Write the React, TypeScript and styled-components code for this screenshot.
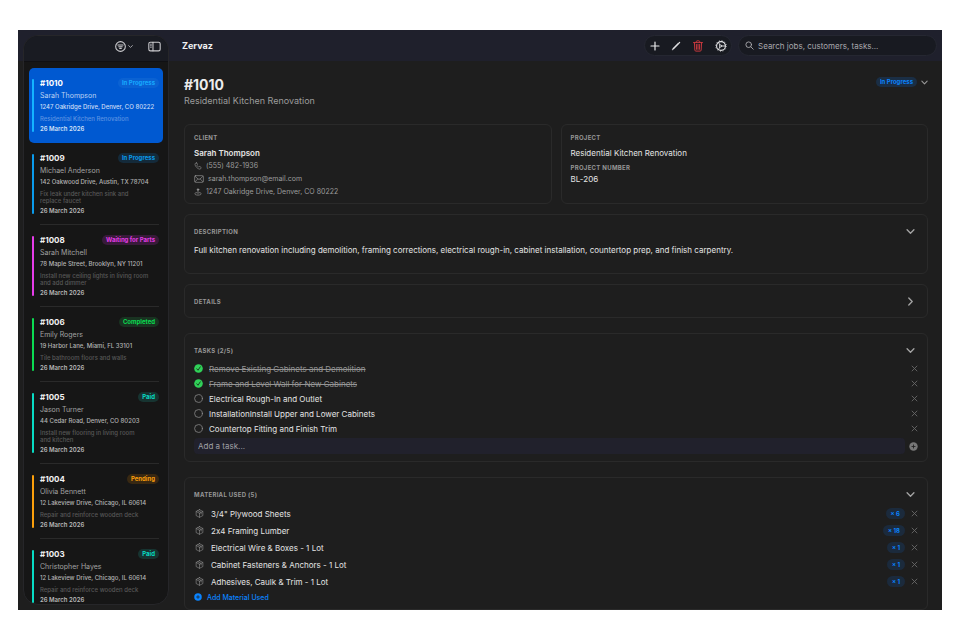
import React, { useState } from "react";
import styled, { createGlobalStyle, css } from "styled-components";

const GlobalStyle = createGlobalStyle`
  *, *::before, *::after { box-sizing: border-box; }
  body {
    margin: 0;
    background: #ffffff;
    font-family: Inter, "Liberation Sans", sans-serif;
    font-feature-settings: "calt" 0;
    -webkit-font-smoothing: antialiased;
  }
  button, input, select { font-family: inherit; }
  h1, h2, h3, p, ul { margin: 0; padding: 0; }
  ul { list-style: none; }
`;

/* ---------- data ---------- */

type Status = "In Progress" | "Waiting for Parts" | "Completed" | "Paid" | "Pending";

const statusColors: Record<Status, { text: string; fill: string }> = {
  "In Progress": { text: "#0a9bec", fill: "#142a3a" },
  "Waiting for Parts": { text: "#e53ce8", fill: "#381a3a" },
  Completed: { text: "#0bdc52", fill: "#193321" },
  Paid: { text: "#08dcc4", fill: "#173431" },
  Pending: { text: "#fb9f0b", fill: "#382812" },
};

interface Job {
  id: string;
  status: Status;
  customer: string;
  address: string;
  summary: string;
  date: string;
}

const jobs: Job[] = [
  { id: "#1010", status: "In Progress", customer: "Sarah Thompson", address: "1247 Oakridge Drive, Denver, CO 80222", summary: "Residential Kitchen Renovation", date: "26 March 2026" },
  { id: "#1009", status: "In Progress", customer: "Michael Anderson", address: "142 Oakwood Drive, Austin, TX 78704", summary: "Fix leak under kitchen sink and\nreplace faucet", date: "26 March 2026" },
  { id: "#1008", status: "Waiting for Parts", customer: "Sarah Mitchell", address: "78 Maple Street, Brooklyn, NY 11201", summary: "Install new ceiling lights in living room\nand add dimmer", date: "26 March 2026" },
  { id: "#1006", status: "Completed", customer: "Emily Rogers", address: "19 Harbor Lane, Miami, FL 33101", summary: "Tile bathroom floors and walls", date: "26 March 2026" },
  { id: "#1005", status: "Paid", customer: "Jason Turner", address: "44 Cedar Road, Denver, CO 80203", summary: "Install new flooring in living room\nand kitchen", date: "26 March 2026" },
  { id: "#1004", status: "Pending", customer: "Olivia Bennett", address: "12 Lakeview Drive, Chicago, IL 60614", summary: "Repair and reinforce wooden deck", date: "26 March 2026" },
  { id: "#1003", status: "Paid", customer: "Christopher Hayes", address: "12 Lakeview Drive, Chicago, IL 60614", summary: "Repair and reinforce wooden deck", date: "26 March 2026" },
];

const initialTasks = [
  { label: "Remove Existing Cabinets and Demolition", done: true },
  { label: "Frame and Level Wall for New Cabinets", done: true },
  { label: "Electrical Rough-In and Outlet", done: false },
  { label: "InstallationInstall Upper and Lower Cabinets", done: false },
  { label: "Countertop Fitting and Finish Trim", done: false },
];

const materials = [
  { label: '3/4" Plywood Sheets', count: 6 },
  { label: "2x4 Framing Lumber", count: 18 },
  { label: "Electrical Wire & Boxes - 1 Lot", count: 1 },
  { label: "Cabinet Fasteners & Anchors - 1 Lot", count: 1 },
  { label: "Adhesives, Caulk & Trim - 1 Lot", count: 1 },
];

/* ---------- icons ---------- */

const Icon = styled.svg<{ $size: number }>`
  display: block;
  flex: none;
  width: ${(p) => p.$size}px;
  height: ${(p) => p.$size}px;
  fill: none;
  stroke: currentColor;
  stroke-width: 1.5;
  stroke-linecap: round;
  stroke-linejoin: round;
`;

interface IconProps {
  size: number;
}

const FilterIcon = ({ size }: IconProps) => (
  <Icon $size={size} viewBox="0 0 20 20" aria-hidden="true">
    <circle cx="10" cy="10" r="8.8" strokeWidth="2" />
    <path d="M5.2 7.4h9.6M6.8 10.4h6.4M8.4 13.400h3.2" strokeWidth="1.9" />
  </Icon>
);
const SidebarIcon = ({ size }: IconProps) => (
  <Icon $size={size} viewBox="0 0 24 24" aria-hidden="true">
    <g strokeWidth="2">
      <rect x="1.5" y="4" width="21" height="16" rx="3" />
      <path d="M9.200 4v16" />
      <path d="M4.600 7.800h1.600M4.600 10.600h1.600M4.600 13.400h1.600" strokeWidth="1.500" />
    </g>
  </Icon>
);
const ChevronDown = ({ size }: IconProps) => (
  <Icon $size={size} viewBox="0 0 10 10" aria-hidden="true">
    <path d="M1.2 3.1 5 6.9l3.8-3.8" />
  </Icon>
);
const ChevronRight = ({ size }: IconProps) => (
  <Icon $size={size} viewBox="0 0 10 10" aria-hidden="true">
    <path d="M3.1 1.2 6.9 5 3.1 8.8" />
  </Icon>
);
const PlusIcon = ({ size }: IconProps) => (
  <Icon $size={size} viewBox="0 0 10 10" aria-hidden="true">
    <path d="M5 1v8M1 5h8" strokeWidth="1.200" />
  </Icon>
);
const PencilIcon = ({ size }: IconProps) => (
  <Icon $size={size} viewBox="0 0 10 10" aria-hidden="true">
    <path d="M1.300 8.700 2 7.200 7.400 1.800l.800.800L2.800 8Z" fill="currentColor" strokeWidth=".5" />
    <path d="m8.300 1.300.400.400" strokeWidth="1.100" />
  </Icon>
);
const TrashIcon = ({ size }: IconProps) => (
  <Icon $size={size} viewBox="0 0 24 24" aria-hidden="true">
    <path
      d="M3 5.2h18M8.6 5V3.2c0-.9.6-1.5 1.5-1.5h3.8c.9 0 1.5.6 1.5 1.5V5M4.8 5.4l.9 14.9c.1 1.1.9 1.9 2 1.9h8.6c1.1 0 1.9-.8 2-1.9l.9-14.9M8.7 8.8l.4 9.8M12 8.8v9.8M15.3 8.8l-.4 9.8"
      strokeWidth="1.900"
    />
  </Icon>
);
const GearIcon = ({ size }: IconProps) => (
  <Icon $size={size} viewBox="0 0 24 24" aria-hidden="true">
    <circle cx="12" cy="12" r="8.800" strokeWidth="2.200" />
    <circle cx="12" cy="12" r="10.600" strokeWidth="1.800" strokeDasharray="1.700 3.850" strokeLinecap="butt" />
    <circle cx="11" cy="12" r="2.200" strokeWidth="1.600" />
    <path d="M13.400 12H20M9.800 10 7.200 5.200M9.800 14l-2.600 4.800" strokeWidth="1.800" />
  </Icon>
);
const SearchIcon = ({ size }: IconProps) => (
  <Icon $size={size} viewBox="0 0 16 16" aria-hidden="true">
    <circle cx="6.6" cy="6.6" r="5" />
    <path d="m10.4 10.4 4.2 4.2" />
  </Icon>
);
const PhoneIcon = ({ size }: IconProps) => (
  <Icon $size={size} viewBox="0 0 24 24" aria-hidden="true">
    <path
      d="M7.2 2.6 3.9 4.4C2.600 5.300 2.600 8 4.500 11.700c2 3.600 4.600 6.200 7.900 8.100 3.500 1.900 6.300 2.200 7.400.700l1.700-2.900c.3-.6.100-1.200-.4-1.600l-4.200-2.600c-.6-.3-1.200-.2-1.600.2l-1.500 1.500c-2.100-.9-4.300-3.100-5.100-5.100l1.300-1.500c.4-.5.500-1.100.1-1.700L8.600 3c-.3-.5-.9-.700-1.400-.4Z"
      strokeWidth="1.800"
    />
  </Icon>
);
const MailIcon = ({ size }: IconProps) => (
  <Icon $size={size} viewBox="0 0 24 24" aria-hidden="true">
    <rect x="1.500" y="4" width="21" height="16" rx="2.600" />
    <path d="m2.500 5.500 8 7.200c.9.800 2.100.8 3 0l8-7.200M2.600 18.700l6.600-6.900M21.400 18.700l-6.600-6.900" />
  </Icon>
);
const PinIcon = ({ size }: IconProps) => (
  <Icon $size={size} viewBox="0 0 24 24" aria-hidden="true">
    <circle cx="12" cy="4.600" r="2.600" fill="currentColor" />
    <path
      d="M12 7.600v9.800M8.600 13.600c-3.700.5-6.300 1.900-6.300 3.700 0 2.300 4.300 4.100 9.700 4.100s9.700-1.800 9.700-4.100c0-1.800-2.600-3.200-6.300-3.700"
      strokeWidth="1.900"
    />
  </Icon>
);
const BoxIcon = ({ size }: IconProps) => (
  <Icon $size={size} viewBox="0 0 24 24" aria-hidden="true">
    <path d="M12 1.800 21 6.500v11L12 22.200 3 17.500v-11L12 1.800ZM3.200 6.700 12 11.400l8.800-4.700M12 11.400V22M7.400 4.300l9 4.800v4.300" />
  </Icon>
);
const CrossIcon = ({ size }: IconProps) => (
  <Icon $size={size} viewBox="0 0 8 8" aria-hidden="true">
    <path d="m1.200 1.200 5.600 5.600M6.800 1.200 1.200 6.800" strokeWidth="1" />
  </Icon>
);
const DiscPlusIcon = ({ size }: IconProps) => (
  <Icon $size={size} viewBox="0 0 16 16" aria-hidden="true">
    <circle cx="8" cy="8" r="7.500" fill="currentColor" stroke="none" />
    <path d="M8 5.200v5.600M5.200 8h5.600" stroke="#1e1e1e" />
  </Icon>
);
const TaskMark = ({ size, done }: IconProps & { done: boolean }) => (
  <Icon $size={size} viewBox="0 0 18 18" aria-hidden="true">
    {done ? (
      <>
        <circle cx="9" cy="9" r="8.600" fill="#30d158" stroke="none" />
        <path d="m5.600 9.600 2.500 2.900 4.400-6.800" stroke="#17381f" strokeWidth="1.800" />
      </>
    ) : (
      <circle cx="9" cy="9" r="7.800" stroke="#8f8f8f" />
    )}
  </Icon>
);

/* ---------- window ---------- */

const Page = styled.div`
  height: 100vh;
  padding: 30px 18px;
`;

const Window = styled.div`
  display: flex;
  height: 100%;
  overflow: hidden;
  background: linear-gradient(#1f202c 31px, #1e1e1e 31px);
`;

/* ---------- sidebar ---------- */

const Sidebar = styled.aside`
  display: flex;
  flex: none;
  flex-direction: column;
  width: 146px;
  margin: 5px 0 5px 5px;
  overflow: hidden;
  border: 1px solid #262629;
  border-radius: 15px;
  background: #161616;
`;

const SidebarBar = styled.div`
  display: flex;
  flex: none;
  align-items: center;
  justify-content: flex-end;
  gap: 15px;
  height: 26px;
  padding: 0 7px 4px 0;
  border-bottom: 1px solid #101013;
  background: #191b22;
  color: #c9c9cc;
`;

const IconButton = styled.button`
  display: flex;
  align-items: center;
  justify-content: center;
  gap: 2px;
  padding: 0;
  border: 0;
  background: none;
  color: inherit;
  cursor: pointer;
`;

const JobList = styled.ul`
  flex: 1;
  min-height: 0;
  overflow-y: auto;
  padding: 6px 5px 0;
  scrollbar-width: none;
`;

const JobBody = styled.span`
  display: flex;
  flex: 1;
  flex-direction: column;
  min-width: 0;
  padding-bottom: 8px;
  border-bottom: 1px solid #2a2a2a;
`;

const JobHead = styled.span`
  display: flex;
  align-items: center;
  justify-content: space-between;
  height: 12px;
  color: #f2f2f2;
  font-size: 8px;
  font-weight: 700;
`;

const JobCustomer = styled.span`
  color: #a2a2a2;
  font-size: 7px;
  line-height: 13px;
`;

const JobAddress = styled.span`
  color: #b4b4b4;
  font-size: 6px;
  font-weight: 500;
  line-height: 10px;
  white-space: nowrap;
`;

const JobSummary = styled.span`
  margin: 3px 0 2px;
  color: #585858;
  font-size: 6px;
  font-weight: 500;
  line-height: 7px;
  white-space: pre-line;
`;

const JobDate = styled.span`
  color: #b8b8b8;
  font-size: 6px;
  font-weight: 600;
  line-height: 10px;
`;

const Badge = styled.span<{ $status: Status }>`
  padding: 0 4px;
  border-radius: 5px;
  background: ${(p) => statusColors[p.$status].fill};
  color: ${(p) => statusColors[p.$status].text};
  font-size: 6px;
  font-weight: 700;
  line-height: 10px;
  white-space: nowrap;
`;

const JobStripe = styled.span<{ $status: Status }>`
  flex: none;
  width: 2px;
  margin: 2px 0 11px;
  border-radius: 1px;
  background: ${(p) => statusColors[p.$status].text};
`;

const JobButton = styled.button<{ $selected: boolean }>`
  display: flex;
  gap: 6px;
  width: 100%;
  padding: 9px 4px 0 3px;
  border: 0;
  border-radius: 5px;
  background: none;
  text-align: left;
  cursor: pointer;

  ${(p) =>
    p.$selected &&
    css`
      background: #0059d1;
      ${JobBody} { border-color: transparent; }
      ${JobHead} { color: #ffffff; }
      ${JobCustomer} { color: #bcd3f3; }
      ${JobAddress} { color: #cfdff6; }
      ${JobSummary} { color: #5c93e2; }
      ${JobDate} { color: #d3e2f7; }
      ${Badge} { background: #0a62d3; color: #16aaff; }
      ${JobStripe} { background: #14b4ff; }
    `}
`;

/* ---------- main column ---------- */

const Main = styled.div`
  display: flex;
  flex: 1;
  flex-direction: column;
  min-width: 0;
`;

const TopBar = styled.header`
  display: flex;
  flex: none;
  align-items: center;
  gap: 6px;
  height: 31px;
  padding: 0 5px 0 13px;
`;

const AppName = styled.h1`
  flex: 1;
  color: #f0f0f2;
  font-size: 9px;
  font-weight: 700;
  line-height: 12px;
`;

const pill = css`
  display: flex;
  align-items: center;
  height: 21px;
  border: 1px solid #252731;
  border-radius: 11px;
  background: #181a21;
`;

const ActionGroup = styled.div`
  ${pill}
  justify-content: space-between;
  width: 88px;
  padding: 0 4px 0 5px;
  color: #e8e8ea;
`;

const DangerButton = styled(IconButton)`
  color: #cf3a3f;
`;

const SearchBox = styled.label`
  ${pill}
  gap: 4px;
  width: 199px;
  padding: 0 6px;
  color: #b4b4b8;
`;

const SearchInput = styled.input`
  flex: 1;
  min-width: 0;
  padding: 0;
  border: 0;
  outline: 0;
  background: none;
  color: #e8e8ea;
  font-size: 8px;
  line-height: 12px;
  &::placeholder { color: #a8a8ac; opacity: 1; }
`;

const Content = styled.main`
  flex: 1;
  min-height: 0;
  overflow-y: auto;
  padding: 15px 14px 0 15px;
  scrollbar-width: none;
`;

const TitleRow = styled.div`
  display: flex;
  align-items: flex-start;
  justify-content: space-between;
  margin-bottom: 16px;
`;

const JobTitle = styled.h2`
  color: #ececec;
  font-size: 14px;
  font-weight: 700;
  line-height: 18px;
`;

const JobSubtitle = styled.p`
  color: #9c9c9c;
  font-size: 9px;
  line-height: 14px;
`;

const StatusPicker = styled.label`
  display: flex;
  align-items: center;
  gap: 4px;
  margin-top: 1px;
  color: #9a9a9a;
`;

const StatusSelect = styled.select`
  appearance: none;
  field-sizing: content;
  height: 10px;
  padding: 0 4px;
  border: 0;
  border-radius: 5px;
  background: #1a2e45;
  color: #0a84ff;
  font-size: 6px;
  font-weight: 700;
  line-height: 10px;
`;

const Card = styled.section`
  padding: 0 9px;
  border: 1px solid #2a2a2a;
  border-radius: 6px;
`;

const Stack = styled.div`
  display: grid;
  gap: 10px;
  margin-bottom: 15px;
`;

const InfoGrid = styled.div`
  display: grid;
  grid-template-columns: 1fr 1fr;
  gap: 9px;
`;

const InfoCard = styled(Card)`
  padding: 7px 9px 5px;
`;

const Caption = styled.h3`
  color: #969696;
  font-size: 6px;
  font-weight: 700;
  letter-spacing: 0.05em;
  line-height: 11px;
  text-transform: uppercase;
`;

const InfoValue = styled.p`
  color: #e4e4e4;
  font-size: 8px;
  line-height: 12px;
`;

const ClientName = styled(InfoValue)`
  margin-top: 4px;
  font-weight: 600;
`;

const ProjectName = styled(InfoValue)`
  margin: 4px 0 3px;
`;

const ContactLine = styled.p`
  display: flex;
  align-items: center;
  gap: 4px;
  height: 12px;
  margin-top: 1px;
  color: #9c9c9c;
  font-size: 7px;
  line-height: 12px;
`;

const CardHead = styled.div`
  display: flex;
  align-items: center;
  justify-content: space-between;
  height: 27px;
  padding: 5px 3px 0 0;
  color: #a4a4a4;
`;

const Description = styled.p`
  padding: 3px 0 18px;
  color: #e4e4e4;
  font-size: 8px;
  line-height: 10px;
`;

const DetailsCard = styled(Card)`
  padding-bottom: 5px;
`;

const TaskCard = styled(Card)`
  margin-bottom: 15px;
  padding-bottom: 7px;
`;

const MaterialCard = styled(Card)`
  padding-bottom: 5px;
`;

const ItemRow = styled.li<{ $height: number }>`
  display: flex;
  align-items: center;
  gap: 6px;
  height: ${(p) => p.$height}px;
`;

const TaskLabel = styled.label`
  display: grid;
  flex: 1;
  grid-template-columns: 9px 1fr;
  align-items: center;
  column-gap: 6px;
`;

const TaskCheckbox = styled.input`
  grid-area: 1 / 1;
  width: 9px;
  height: 9px;
  margin: 0;
  opacity: 0;
`;

const MarkSlot = styled.span`
  grid-area: 1 / 1;
  pointer-events: none;
`;

const ItemText = styled.span<{ $done?: boolean }>`
  flex: 1;
  color: ${(p) => (p.$done ? "#949494" : "#e4e4e4")};
  font-size: 8px;
  line-height: 12px;
  text-decoration: ${(p) => (p.$done ? "line-through" : "none")};
`;

const RemoveButton = styled(IconButton)`
  color: #6a6a6a;
`;

const AddTaskRow = styled.div`
  display: flex;
  align-items: center;
  gap: 4px;
  margin-top: 2px;
  color: #777777;
`;

const AddTaskInput = styled.input`
  flex: 1;
  height: 16px;
  padding: 0 4px;
  border: 0;
  border-radius: 4px;
  outline: 0;
  background: #21212c;
  color: #dedede;
  font-size: 8px;
  &::placeholder { color: #a0a0a4; opacity: 1; }
`;

const MaterialName = styled.span`
  display: flex;
  flex: 1;
  align-items: center;
  gap: 7px;
  color: #9a9a9a;
`;

const CountBadge = styled.span`
  padding: 0 5px;
  border-radius: 6px;
  background: #1b2a3c;
  color: #0a84ff;
  font-size: 6px;
  font-weight: 700;
  line-height: 11px;
`;

const AddMaterial = styled(IconButton)`
  gap: 5px;
  height: 14px;
  color: #0a84ff;
  font-size: 7px;
  font-weight: 500;
`;

const MaterialList = styled.ul`
  padding-left: 1px;
`;

export default function App() {
  const [selected, setSelected] = useState("#1010");
  const [tasks, setTasks] = useState(initialTasks);

  const toggle = (index: number) =>
    setTasks(tasks.map((t, i) => (i === index ? { ...t, done: !t.done } : t)));

  return (
    <Page>
      <GlobalStyle />
      <Window>
        <Sidebar>
          <SidebarBar>
            <IconButton aria-label="Filter jobs">
              <FilterIcon size={11} />
              <ChevronDown size={5} />
            </IconButton>
            <IconButton aria-label="Toggle sidebar">
              <SidebarIcon size={13} />
            </IconButton>
          </SidebarBar>
          <JobList>
            {jobs.map((job) => (
              <li key={job.id}>
                <JobButton $selected={job.id === selected} onClick={() => setSelected(job.id)}>
                  <JobStripe $status={job.status} />
                  <JobBody>
                    <JobHead>
                      {job.id}
                      <Badge $status={job.status}>{job.status}</Badge>
                    </JobHead>
                    <JobCustomer>{job.customer}</JobCustomer>
                    <JobAddress>{job.address}</JobAddress>
                    <JobSummary>{job.summary}</JobSummary>
                    <JobDate>{job.date}</JobDate>
                  </JobBody>
                </JobButton>
              </li>
            ))}
          </JobList>
        </Sidebar>

        <Main>
          <TopBar>
            <AppName>Zervaz</AppName>
            <ActionGroup>
              <IconButton aria-label="New job"><PlusIcon size={10} /></IconButton>
              <IconButton aria-label="Edit job"><PencilIcon size={10} /></IconButton>
              <DangerButton aria-label="Delete job"><TrashIcon size={12} /></DangerButton>
              <IconButton aria-label="Settings"><GearIcon size={12} /></IconButton>
            </ActionGroup>
            <SearchBox>
              <SearchIcon size={9} />
              <SearchInput type="text" aria-label="Search" placeholder="Search jobs, customers, tasks..." />
            </SearchBox>
          </TopBar>

          <Content>
            <TitleRow>
              <div>
                <JobTitle>#1010</JobTitle>
                <JobSubtitle>Residential Kitchen Renovation</JobSubtitle>
              </div>
              <StatusPicker>
                <StatusSelect aria-label="Status" defaultValue="In Progress">
                  {Object.keys(statusColors).map((s) => (
                    <option key={s}>{s}</option>
                  ))}
                </StatusSelect>
                <ChevronDown size={7} />
              </StatusPicker>
            </TitleRow>

            <Stack>
              <InfoGrid>
                <InfoCard>
                  <Caption>Client</Caption>
                  <ClientName>Sarah Thompson</ClientName>
                  <ContactLine><PhoneIcon size={8} />(555) 482-1936</ContactLine>
                  <ContactLine><MailIcon size={10} />sarah.thompson@email.com</ContactLine>
                  <ContactLine><PinIcon size={8} />1247 Oakridge Drive, Denver, CO 80222</ContactLine>
                </InfoCard>
                <InfoCard>
                  <Caption>Project</Caption>
                  <ProjectName>Residential Kitchen Renovation</ProjectName>
                  <Caption>Project Number</Caption>
                  <InfoValue>BL-206</InfoValue>
                </InfoCard>
              </InfoGrid>

              <Card>
                <CardHead>
                  <Caption>Description</Caption>
                  <IconButton aria-label="Collapse description"><ChevronDown size={9} /></IconButton>
                </CardHead>
                <Description>
                  Full kitchen renovation including demolition, framing corrections, electrical rough-in, cabinet
                  installation, countertop prep, and finish carpentry.
                </Description>
              </Card>

              <DetailsCard>
                <CardHead>
                  <Caption>Details</Caption>
                  <IconButton aria-label="Expand details"><ChevronRight size={9} /></IconButton>
                </CardHead>
              </DetailsCard>
            </Stack>

            <TaskCard>
              <CardHead>
                <Caption>Tasks ({tasks.filter((t) => t.done).length}/{tasks.length})</Caption>
                <IconButton aria-label="Collapse tasks"><ChevronDown size={9} /></IconButton>
              </CardHead>
              <ul>
                {tasks.map((task, i) => (
                  <ItemRow key={task.label} $height={15}>
                    <TaskLabel>
                      <TaskCheckbox type="checkbox" checked={task.done} onChange={() => toggle(i)} />
                      <MarkSlot><TaskMark size={9} done={task.done} /></MarkSlot>
                      <ItemText $done={task.done}>{task.label}</ItemText>
                    </TaskLabel>
                    <RemoveButton aria-label={`Remove ${task.label}`}><CrossIcon size={7} /></RemoveButton>
                  </ItemRow>
                ))}
              </ul>
              <AddTaskRow>
                <AddTaskInput type="text" aria-label="Add a task" placeholder="Add a task..." />
                <IconButton aria-label="Add task"><DiscPlusIcon size={9} /></IconButton>
              </AddTaskRow>
            </TaskCard>

            <MaterialCard>
              <CardHead>
                <Caption>Material Used ({materials.length})</Caption>
                <IconButton aria-label="Collapse materials"><ChevronDown size={9} /></IconButton>
              </CardHead>
              <MaterialList>
                {materials.map((m) => (
                  <ItemRow key={m.label} $height={17}>
                    <MaterialName>
                      <BoxIcon size={9} />
                      <ItemText>{m.label}</ItemText>
                    </MaterialName>
                    <CountBadge>× {m.count}</CountBadge>
                    <RemoveButton aria-label={`Remove ${m.label}`}><CrossIcon size={7} /></RemoveButton>
                  </ItemRow>
                ))}
              </MaterialList>
              <AddMaterial><DiscPlusIcon size={8} />Add Material Used</AddMaterial>
            </MaterialCard>
          </Content>
        </Main>
      </Window>
    </Page>
  );
}
